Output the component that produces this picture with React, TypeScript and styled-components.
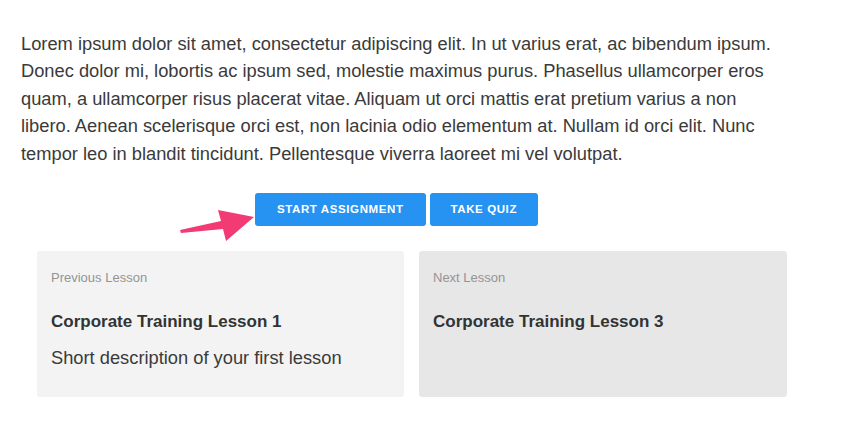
import React from 'react';
import styled, { createGlobalStyle } from 'styled-components';

const GlobalStyle = createGlobalStyle`
  body {
    margin: 0;
    background: #ffffff;
    font-family: 'Liberation Sans', Arial, Helvetica, sans-serif;
    color: #333333;
  }
`;

const Page = styled.div`
  padding: 29.5px 21px 0 21px;
  width: 867px;
  box-sizing: border-box;
`;

const Body = styled.p`
  margin: 0;
  width: 800px;
  font-size: 18.3px;
  line-height: 27.5px;
  color: #3a3a3a;
`;

const ButtonRow = styled.div`
  position: relative;
  display: flex;
  gap: 4px;
  margin: 25.5px 0 0 234px;
`;

const ActionButton = styled.button<{ $wide?: boolean }>`
  height: 33px;
  padding: 0 ${({ $wide }) => ($wide ? '22px' : '21px')};
  border: none;
  border-radius: 3px;
  background: #2693f3;
  color: #ffffff;
  font-family: 'Liberation Sans', Arial, sans-serif;
  font-size: 11.5px;
  font-weight: 700;
  letter-spacing: 0.6px;
  text-transform: uppercase;
  cursor: pointer;
`;

const Pointer = styled.svg`
  position: absolute;
  left: -76px;
  top: 15px;
`;

const Cards = styled.div`
  display: grid;
  grid-template-columns: 367px 368px;
  gap: 15px;
  margin: 25px 0 0 16px;
`;

const Card = styled.div<{ $tone: string }>`
  height: 146px;
  box-sizing: border-box;
  padding: 19px 14px 0 14px;
  border-radius: 3px;
  background: ${({ $tone }) => $tone};
`;

const CardLabel = styled.div`
  font-size: 13px;
  font-weight: 300;
  color: #949494;
  line-height: 16px;
`;

const CardTitle = styled.div`
  margin-top: 26px;
  font-size: 17px;
  font-weight: 700;
  color: #333333;
  line-height: 20px;
`;

const CardText = styled.div`
  margin-top: 16px;
  font-size: 18.3px;
  color: #3a3a3a;
  line-height: 20px;
`;

export default function App() {
  return (
    <>
      <GlobalStyle />
      <Page>
        <Body>
          Lorem ipsum dolor sit amet, consectetur adipiscing elit. In ut varius erat, ac bibendum ipsum.
          <br />
          Donec dolor mi, lobortis ac ipsum sed, molestie maximus purus. Phasellus ullamcorper eros
          <br />
          quam, a ullamcorper risus placerat vitae. Aliquam ut orci mattis erat pretium varius a non
          <br />
          libero. Aenean scelerisque orci est, non lacinia odio elementum at. Nullam id orci elit. Nunc
          <br />
          tempor leo in blandit tincidunt. Pellentesque viverra laoreet mi vel volutpat.
        </Body>
        <ButtonRow>
          <Pointer width="76" height="36" viewBox="0 0 76 36">
            <path d="M1 22 L42 13 L39 2 L75 9 L47 33 L44 21 L2 25 Z" fill="#f23a74" />
          </Pointer>
          <ActionButton $wide>Start Assignment</ActionButton>
          <ActionButton>Take Quiz</ActionButton>
        </ButtonRow>
        <Cards>
          <Card $tone="#f3f3f3">
            <CardLabel>Previous Lesson</CardLabel>
            <CardTitle>Corporate Training Lesson 1</CardTitle>
            <CardText>Short description of your first lesson</CardText>
          </Card>
          <Card $tone="#e7e7e7">
            <CardLabel>Next Lesson</CardLabel>
            <CardTitle>Corporate Training Lesson 3</CardTitle>
          </Card>
        </Cards>
      </Page>
    </>
  );
}
